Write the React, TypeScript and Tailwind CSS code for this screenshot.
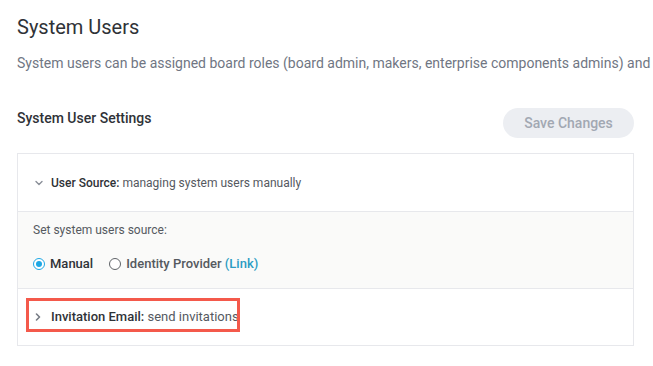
import React from "react";

function ChevronDown() {
  return (
    <svg width="8" height="6" viewBox="0 0 8 6" className="shrink-0" aria-hidden>
      <path d="M1 1.5 4 4.5 7 1.5" fill="none" stroke="#8a8f98" strokeWidth="1.4" strokeLinecap="round" strokeLinejoin="round" />
    </svg>
  );
}

function ChevronRight() {
  return (
    <svg width="6" height="8" viewBox="0 0 6 8" className="shrink-0" aria-hidden>
      <path d="M1.5 1 4.5 4 1.5 7" fill="none" stroke="#767b84" strokeWidth="1.6" strokeLinecap="round" strokeLinejoin="round" />
    </svg>
  );
}

function Radio({ checked, label, extra }: { checked?: boolean; label: string; extra?: React.ReactNode }) {
  return (
    <label className="flex items-center gap-[5px]">
      <span
        className={
          checked
            ? "grid h-[12px] w-[12px] place-items-center rounded-full border border-[#1ea7e4] bg-white"
            : "grid h-[12px] w-[12px] place-items-center rounded-full border border-[#5f6368] bg-white"
        }
      >
        {checked && <span className="h-[6px] w-[6px] rounded-full bg-[#1ea7e4]" />}
      </span>
      <span className={checked ? "font-medium text-[#2f3237]" : "font-medium text-[#55595f]"}>
        {label}
        {extra}
      </span>
    </label>
  );
}

export default function App() {
  return (
    <div className="h-[366px] w-[653px] overflow-hidden bg-white pl-[17px] font-['Roboto',sans-serif] text-[#333]">
      <h1 className="pt-[15px] text-[20px] font-normal leading-6 text-[#2f3237]">System Users</h1>
      <p className="mt-[14px] whitespace-nowrap text-[14px] leading-5 text-[#707683]">
        System users can be assigned board roles (board admin, makers, enterprise components admins) and
      </p>

      <div className="mt-[35px] flex w-[617px] items-start justify-between">
        <h2 className="text-[14px] font-medium leading-5 text-[#2f3237]">System User Settings</h2>
        <button className="h-[30px] w-[131px] rounded-full bg-[#eceef2] text-[14px] font-medium text-[#a2a8b2]">Save Changes</button>
      </div>

      <section className="mt-[15px] w-[617px] border border-[#e7e8ec]">
        <div className="flex h-[57px] items-center gap-[8px] pl-[17px] text-[12px]">
          <ChevronDown />
          <p>
            <span className="font-medium text-[#2f3237]">User Source:</span>{" "}
            <span className="text-[#55595f]">managing system users manually</span>
          </p>
        </div>
        <div className="border-y border-[#e7e8ec] bg-[#fafaf9] pb-[15px] pl-[15px] pt-[9px] text-[12px]">
          <p className="leading-[18px] text-[#55595f]">Set system users source:</p>
          <div className="mt-[16px] flex h-[18px] items-center gap-[16px] text-[13px]">
            <Radio checked label="Manual" />
            <Radio label="Identity Provider" extra={<span className="text-[#2b9cc3]"> (Link)</span>} />
          </div>
        </div>
        <div className="relative flex h-[56px] items-center gap-[10px] pl-[17px] text-[13px]">
          <ChevronRight />
          <p>
            <span className="font-medium text-[#2f3237]">Invitation Email:</span>{" "}
            <span className="text-[#55595f]">send invitations</span>
          </p>
          <div className="absolute left-[8px] top-[9px] h-[34px] w-[214px] border-[3px] border-[#f4594b]" />
        </div>
      </section>
    </div>
  );
}
